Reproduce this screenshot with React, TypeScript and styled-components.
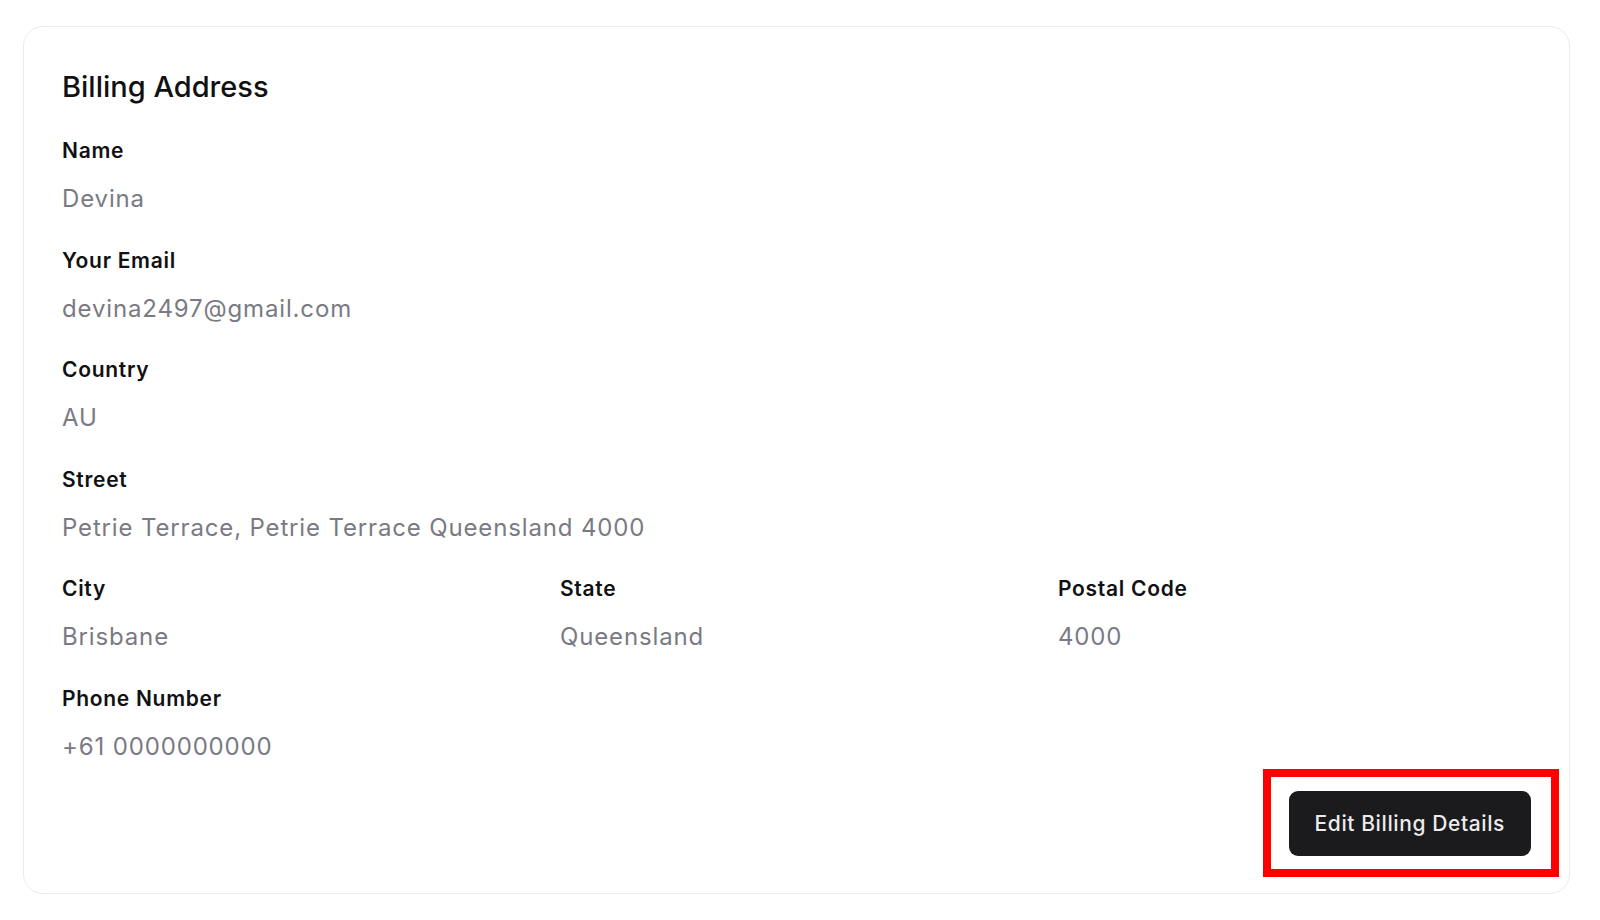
import React from "react"
import styled, { createGlobalStyle } from "styled-components"

const GlobalStyle = createGlobalStyle`
  html, body {
    margin: 0;
    background: #ffffff;
  }
  body {
    padding: 26px 30px 27px 23px;
    font-family: Inter, "Noto Sans", sans-serif;
    -webkit-font-smoothing: antialiased;
  }
`

const Card = styled.section`
  border: 1px solid #ebebeb;
  border-radius: 20px;
  padding: 42px 38px 37px 38px;
  display: flex;
  flex-direction: column;
`

const Title = styled.h2`
  margin: 0 0 31px;
  font-size: 29px;
  line-height: 36px;
  font-weight: 500;
  color: #111113;
`

const Fields = styled.div`
  display: flex;
  flex-direction: column;
  gap: 31.5px;
`

const Row = styled.div`
  display: grid;
  grid-template-columns: repeat(3, 1fr);
  column-gap: 25px;
`

const Field = styled.div`
  display: flex;
  flex-direction: column;
  gap: 18px;
`

const Label = styled.span`
  font-size: 21px;
  line-height: 30px;
  font-weight: 600;
  letter-spacing: 0.7px;
  color: #111113;
`

const Value = styled.span`
  font-size: 24px;
  line-height: 30px;
  font-weight: 400;
  letter-spacing: 0.85px;
  color: #7a7a84;
`

const Actions = styled.div`
  display: flex;
  justify-content: flex-end;
  margin-top: 29px;
`

const Highlight = styled.div`
  position: relative;
`

const Frame = styled.span`
  position: absolute;
  inset: -22px -28px -21px -26px;
  border: 8px solid #ff0000;
  pointer-events: none;
`

const Button = styled.button`
  height: 65px;
  padding: 0 26px;
  border: none;
  border-radius: 9px;
  background: #1b1b1d;
  color: #ececee;
  font-family: inherit;
  font-size: 21px;
  font-weight: 500;
  letter-spacing: 0.6px;
  cursor: pointer;
`

type Item = { label: string; value: string }

const InfoField = ({ label, value }: Item) => (
  <Field>
    <Label>{label}</Label>
    <Value>{value}</Value>
  </Field>
)

const billing = {
  name: "Devina",
  email: "devina2497@gmail.com",
  country: "AU",
  street: "Petrie Terrace, Petrie Terrace Queensland 4000",
  city: "Brisbane",
  state: "Queensland",
  postalCode: "4000",
  phone: "+61 0000000000",
}

const App = () => {
  return (
    <>
      <GlobalStyle />
      <Card>
        <Title>Billing Address</Title>
        <Fields>
          <InfoField label="Name" value={billing.name} />
          <InfoField label="Your Email" value={billing.email} />
          <InfoField label="Country" value={billing.country} />
          <InfoField label="Street" value={billing.street} />
          <Row>
            <InfoField label="City" value={billing.city} />
            <InfoField label="State" value={billing.state} />
            <InfoField label="Postal Code" value={billing.postalCode} />
          </Row>
          <InfoField label="Phone Number" value={billing.phone} />
        </Fields>
        <Actions>
          <Highlight>
            <Frame />
            <Button>Edit Billing Details</Button>
          </Highlight>
        </Actions>
      </Card>
    </>
  )
}

export default App
